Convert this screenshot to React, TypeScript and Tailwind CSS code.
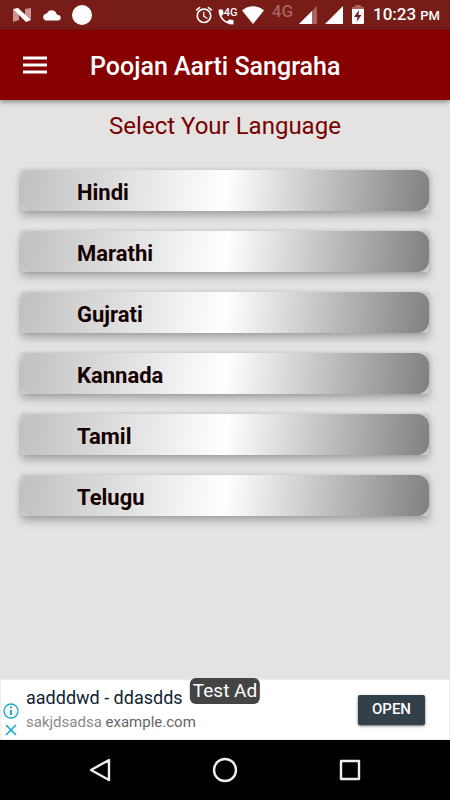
import type { ReactNode } from "react";

const LANGUAGES = ["Hindi", "Marathi", "Gujrati", "Kannada", "Tamil", "Telugu"];

function StatusBar() {
  return (
    <div className="flex h-[30px] shrink-0 items-center justify-between bg-[#781c18] pl-3 pr-2.5 text-white">
      <div className="flex items-center gap-2.5">
        <svg width="20" height="16" viewBox="0 0 20 16">
          <path d="M1 3l6-2v12l-6 2z" fill="#c99492" />
          <path d="M19 1l-6 1v12l6-2z" fill="#c99492" />
          <path d="M1 2l5-1 13 12-5 2z" fill="#fff" />
        </svg>
        <svg width="20" height="14" viewBox="0 0 20 14" fill="currentColor">
          <path d="M3.500 12.500a3.500 3.500 0 0 1-.3-6.500c1-.5 1.800-.4 1.800-.4a5 5 0 0 1 9.500.2c.5.900.8 1.200 1.500 1.300a2.700 2.700 0 0 1 0 5.400z" />
        </svg>
        <span className="size-5 rounded-full bg-white" />
      </div>
      <div className="flex items-center">
        {/* alarm */}
        <svg width="20" height="20" viewBox="0 0 24 24" fill="currentColor">
          <path d="M22 5.720l-4.600-3.860-1.290 1.530 4.600 3.860L22 5.720zM7.880 3.390L6.600 1.860 2 5.710l1.290 1.530 4.590-3.850zM12.500 8H11v6l4.750 2.850.75-1.230-4-2.370V8zM12 4c-4.970 0-9 4.030-9 9s4.020 9 9 9c4.970 0 9-4.030 9-9s-4.030-9-9-9zm0 16c-3.870 0-7-3.130-7-7s3.130-7 7-7 7 3.130 7 7-3.130 7-7 7z" />
        </svg>
        {/* call on 4G */}
        <div className="relative ml-0.5 h-5 w-6">
          <svg className="mt-0.5" width="20" height="20" viewBox="0 0 24 24" fill="currentColor">
            <path d="M20 15.500c-1.250 0-2.450-.2-3.570-.57-.35-.11-.74-.03-1.020.24l-2.200 2.200c-2.830-1.440-5.150-3.750-6.590-6.590l2.200-2.210c.28-.26.36-.65.25-1C8.700 6.450 8.500 5.250 8.500 4c0-.55-.45-1-1-1H4c-.55 0-1 .45-1 1 0 9.390 7.610 17 17 17 .55 0 1-.45 1-1v-3.500c0-.55-.45-1-1-1z" />
          </svg>
          <span className="absolute left-2 top-0.5 text-[11px] font-medium leading-3">4G</span>
        </div>
        <svg className="ml-0.5" width="22" height="18" viewBox="0 0 22 18" fill="currentColor">
          <path d="M11 18L0 4.500C6-1.200 16-1.200 22 4.500z" />
        </svg>
        <span className="ml-2 -mt-2 text-[17px] leading-4 font-medium text-[#a8625f]">4G</span>
        <svg className="ml-1.5" width="18" height="20" viewBox="0 0 18 20">
          <path d="M18 1v18H0z" fill="#a8625f" />
          <path d="M13 6v13H0z" fill="#fff" />
        </svg>
        <svg className="ml-2" width="18" height="20" viewBox="0 0 18 20" fill="currentColor">
          <path d="M18 1v18H0z" />
        </svg>
        <svg className="ml-2" width="14" height="20" viewBox="0 0 14 20">
          <path d="M4 0h6v2h3v3H1V2h3z" fill="#a8625f" />
          <path d="M1 4h12v14a1 1 0 0 1-1 1H2a1 1 0 0 1-1-1z" fill="#fff" />
          <path d="M8 5L3 12h3.500L5.500 17l5-7H7.500z" fill="#781c18" />
        </svg>
        <span className="ml-2 text-[17px] font-medium leading-5">
          10:23 <span className="text-[13px]">PM</span>
        </span>
      </div>
    </div>
  );
}

function NavButton({ label, children }: { label: string; children: ReactNode }) {
  return (
    <button aria-label={label} className="flex h-full flex-1 items-center justify-center">
      <svg width="26" height="26" viewBox="0 0 26 26" fill="none" stroke="#eee" strokeWidth="2.400" strokeLinejoin="round">
        {children}
      </svg>
    </button>
  );
}

function AdBanner() {
  return (
    <div className="relative flex h-[61px] shrink-0 items-center border border-[#eee] bg-white pr-6">
      <div className="flex w-[25px] flex-col items-center gap-1 self-end pr-1.5 pb-0.5">
        <svg width="16" height="16" viewBox="0 0 16 16" fill="none" stroke="#1ba9cc" strokeWidth="1.300">
          <circle cx="8" cy="8" r="7" />
          <path d="M8 7v5M8 3.500v1.800" strokeWidth="2" />
        </svg>
        <svg width="14" height="14" viewBox="0 0 14 14" stroke="#1ba9cc" strokeWidth="1.700">
          <path d="M2 2l10 10M12 2L2 12" />
        </svg>
      </div>
      <div className="flex-1">
        <p className="text-lg leading-6 text-[#0f2430]">aadddwd - ddasdds</p>
        <p className="text-[15px] leading-6 text-[#8a8a8a]">
          sakjdsadsa <span className="text-[#666]">example.com</span>
        </p>
      </div>
      <button className="h-[30px] w-[67px] rounded-xs bg-[#324049] text-[15px] font-medium text-white shadow-sm shadow-black/50">
        OPEN
      </button>
      <span className="absolute -top-0.5 left-1/2 -translate-x-1/2 whitespace-nowrap rounded-md bg-[#444] px-[3px] text-[19px] leading-[26px] text-white">
        Test Ad
      </span>
    </div>
  );
}

export default function App() {
  return (
    <div className="flex min-h-screen flex-col bg-[#e4e3e1] font-[Roboto,sans-serif]">
      <StatusBar />
      <header className="z-10 flex h-[70px] shrink-0 items-center bg-[#870000] pl-[23px] text-white shadow-[0_2px_5px_rgba(0,0,0,0.4)]">
        <button aria-label="Menu" className="flex h-10 w-6 items-center">
          <svg width="24" height="18" viewBox="0 0 24 18" stroke="currentColor" strokeWidth="3">
            <path d="M0 2h24M0 9h24M0 16h24" />
          </svg>
        </button>
        <h1 className="ml-[43px] pt-1 text-[25px] font-medium leading-8">Poojan Aarti Sangraha</h1>
      </header>

      <main className="flex-1">
        <h2 className="pt-2.5 text-center text-2xl leading-8 text-[#780000]">Select Your Language</h2>
        <ul className="mx-[21px] mt-7 flex flex-col gap-5">
          {LANGUAGES.map((name) => (
            <li
              key={name}
              className="rounded-xs bg-[#cbcac9] shadow-[0_5px_8px_rgba(0,0,0,0.26),0_0_4px_rgba(0,0,0,0.12)]"
            >
              <button className="block h-[41px] w-full rounded-xl bg-linear-[96deg,#c0c0c0,#fff_50%,#808080] pl-14 pt-1 text-left text-[22px] font-bold text-[#140000]">
                {name}
              </button>
            </li>
          ))}
        </ul>
      </main>

      <AdBanner />
      <nav className="flex h-[60px] shrink-0 items-center bg-black px-[37px]">
        <NavButton label="Back">
          <path d="M22 3v20L4 13z" />
        </NavButton>
        <NavButton label="Home">
          <circle cx="13" cy="13" r="11" />
        </NavButton>
        <NavButton label="Recent apps">
          <rect x="4" y="4" width="18" height="18" />
        </NavButton>
      </nav>
    </div>
  );
}
